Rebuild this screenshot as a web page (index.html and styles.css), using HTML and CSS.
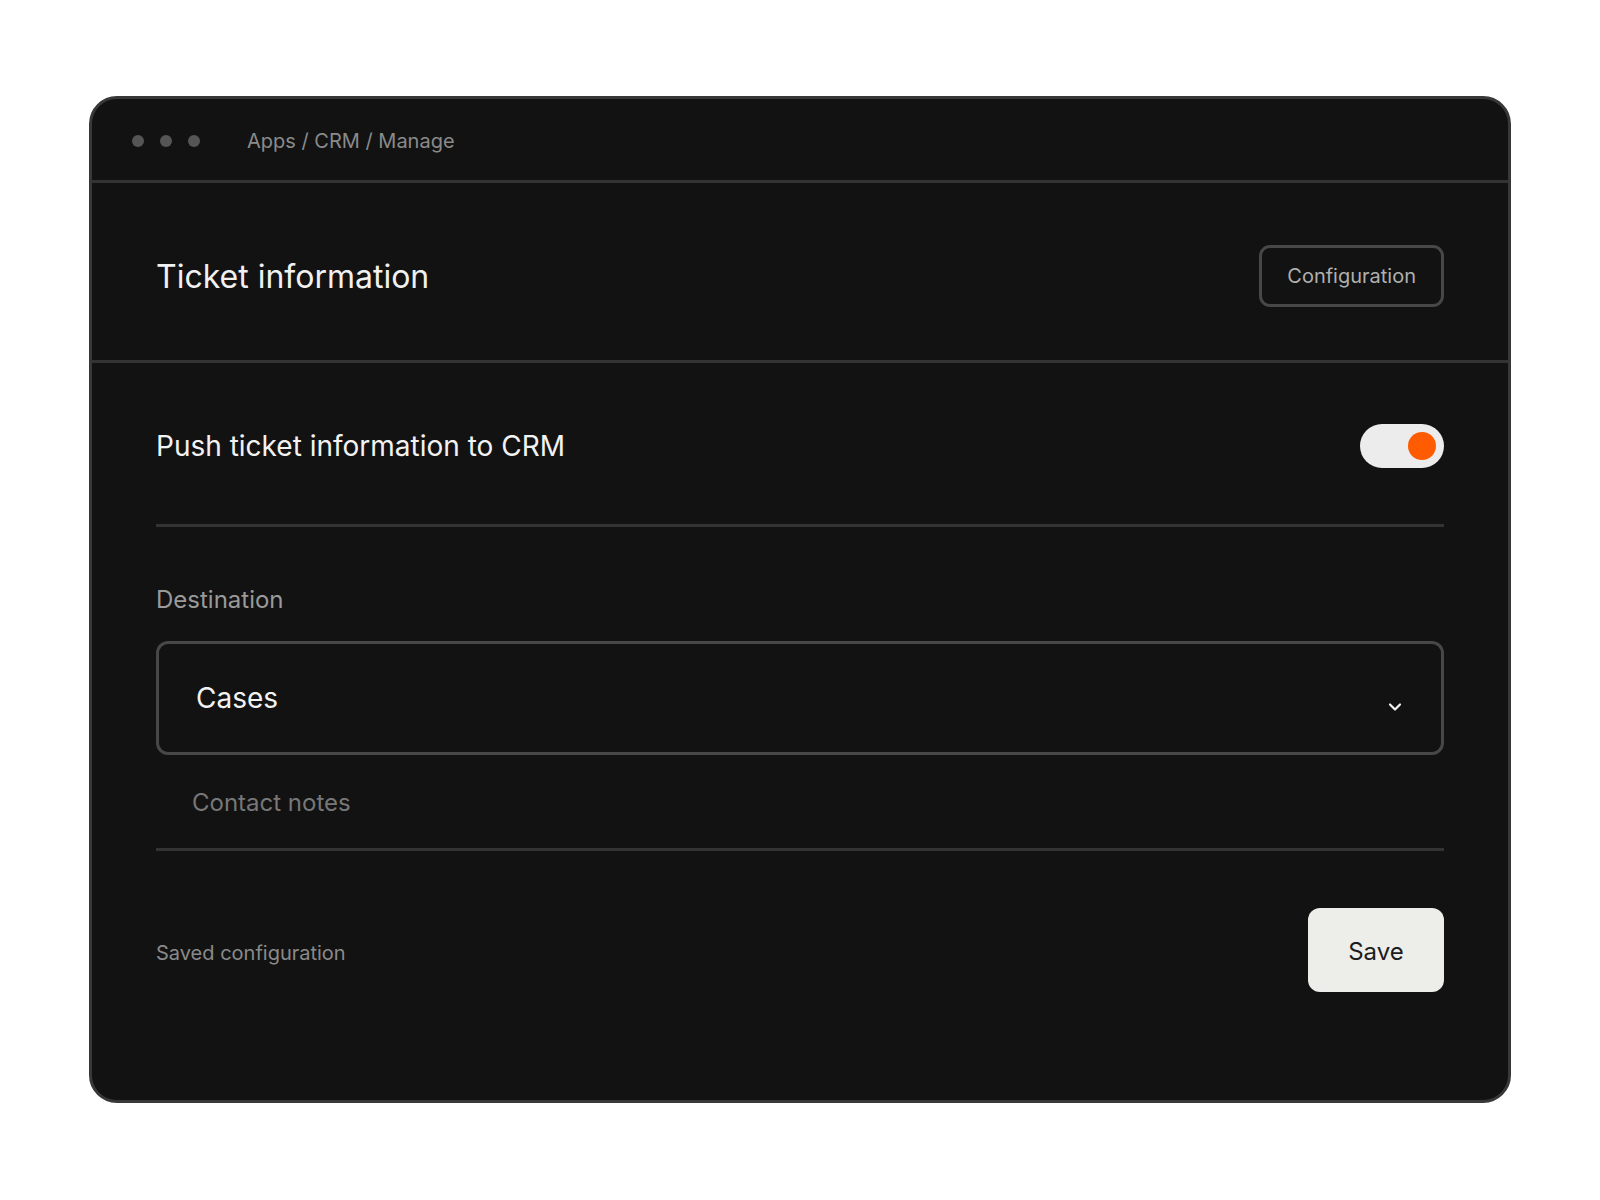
FILE: index.html
```html
<!DOCTYPE html>
<html lang="en">
<head>
  <meta charset="UTF-8">
  <title>Ticket information</title>
  <link rel="stylesheet" href="styles.css">
</head>
<body>
  <div class="window">
    <div class="titlebar">
      <div class="dots">
        <span class="dot"></span>
        <span class="dot"></span>
        <span class="dot"></span>
      </div>
      <div class="crumbs">Apps / CRM / Manage</div>
    </div>

    <div class="header">
      <h1>Ticket information</h1>
      <button class="config-btn">Configuration</button>
    </div>

    <div class="content">
      <div class="push-row">
        <span class="push-label">Push ticket information to CRM</span>
        <div class="toggle"><span class="knob"></span></div>
      </div>

      <div class="destination">
        <div class="field-label">Destination</div>
        <div class="select">
          <span>Cases</span>
          <svg class="chevron" width="14" height="10" viewBox="0 0 14 10">
            <path d="M2 2.5 L7 7.5 L12 2.5" fill="none" stroke="#f2f2f2" stroke-width="2.2" stroke-linecap="round" stroke-linejoin="round"/>
          </svg>
        </div>
        <div class="option">Contact notes</div>
      </div>

      <div class="footer">
        <span class="status">Saved configuration</span>
        <button class="save-btn">Save</button>
      </div>
    </div>
  </div>
</body>
</html>
```

FILE: styles.css
```css
* { box-sizing: border-box; }
body {
  margin: 0;
  background: #fff;
  font-family: Inter, "Noto Sans", sans-serif;
}
.window {
  width: 1422px;
  margin: 96px auto 0;
  background: #121212;
  border: 3px solid #383838;
  border-radius: 28px;
  overflow: hidden;
}
.titlebar {
  height: 84px;
  padding: 2px 40px 0;
  display: flex;
  align-items: center;
  gap: 47px;
  border-bottom: 3px solid #333;
}
.dots {
  display: flex;
  gap: 16px;
}
.dot {
  width: 12px;
  height: 12px;
  border-radius: 50%;
  background: #555;
}
.crumbs {
  font-size: 20px;
  color: #8a8a8a;
}
.header {
  display: flex;
  justify-content: space-between;
  align-items: center;
  padding: 62px 64px 53px 64px;
  border-bottom: 3px solid #333;
}
.header h1 {
  margin: 0;
  font-size: 32px;
  font-weight: 400;
  color: #f0f0f0;
}
.config-btn {
  height: 62px;
  padding: 0 25px;
  background: transparent;
  border: 3px solid #474747;
  border-radius: 11px;
  color: #b0b0b0;
  font-family: inherit;
  font-size: 20px;
}
.content {
  padding: 0 64px;
}
.push-row {
  display: flex;
  justify-content: space-between;
  align-items: center;
  padding: 61px 0 56px;
  border-bottom: 3px solid #333;
}
.push-label {
  font-size: 28px;
  color: #f2f2f2;
}
.toggle {
  width: 84px;
  height: 44px;
  border-radius: 22px;
  background: #ececec;
  display: flex;
  justify-content: flex-end;
  align-items: center;
  padding-right: 8px;
}
.knob {
  width: 28px;
  height: 28px;
  border-radius: 50%;
  background: #ff5b00;
}
.destination {
  padding: 61px 0 33px;
  border-bottom: 3px solid #333;
}
.field-label {
  font-size: 24px;
  line-height: 24px;
  color: #9a9a9a;
}
.select {
  margin-top: 29px;
  height: 114px;
  border: 3px solid #474747;
  border-radius: 12px;
  display: flex;
  justify-content: space-between;
  align-items: center;
  padding: 0 39px 0 37px;
  font-size: 28px;
  color: #f2f2f2;
}
.chevron {
  margin-top: 18px;
}
.option {
  margin-top: 36px;
  padding-left: 36px;
  font-size: 24px;
  line-height: 24px;
  color: #777;
}
.footer {
  display: flex;
  justify-content: space-between;
  align-items: center;
  padding: 57px 0 108px;
}
.status {
  margin-top: 6px;
  font-size: 20px;
  color: #8a8a8a;
}
.save-btn {
  width: 136px;
  height: 84px;
  padding: 2px 0 0;
  border: none;
  border-radius: 12px;
  background: #ededea;
  color: #1c1c1c;
  font-family: inherit;
  font-size: 24px;
}
```
